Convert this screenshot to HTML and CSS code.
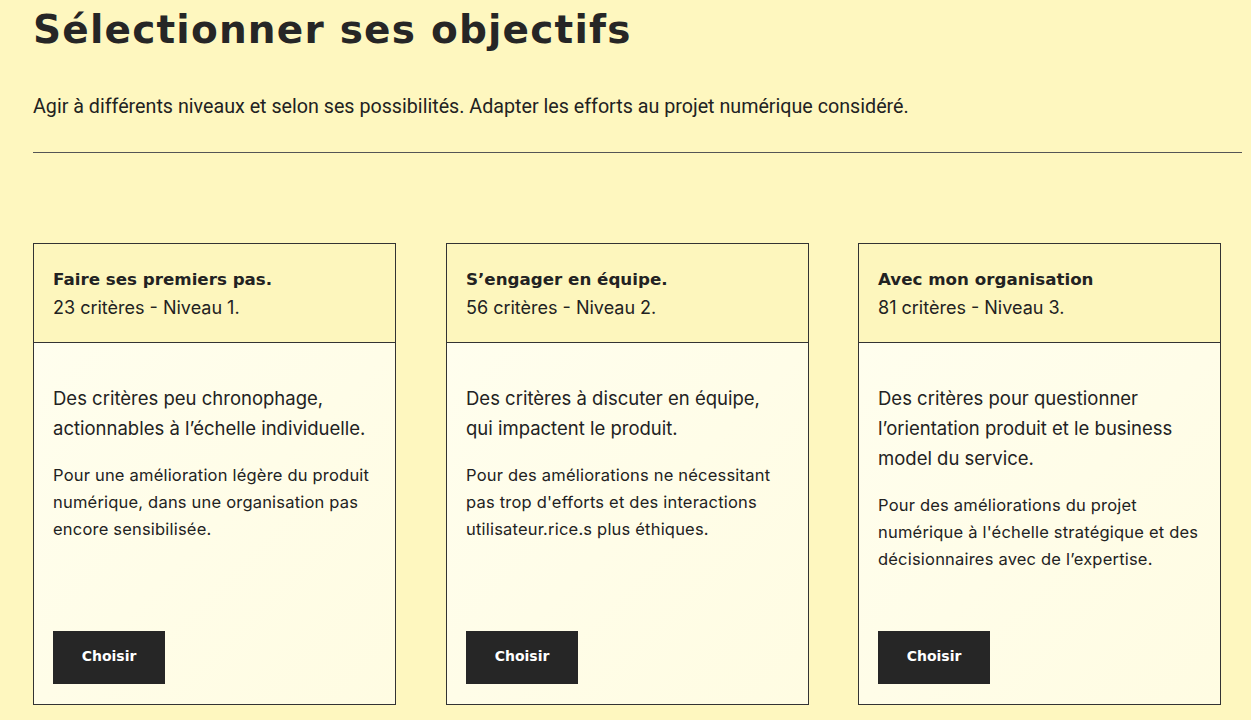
FILE: index.html
```html
<!DOCTYPE html>
<html lang="fr">
<head>
    <meta charset="UTF-8">
    <meta name="viewport" content="width=device-width, initial-scale=1.0">
    <title>Sélectionner ses objectifs</title>
    <link rel="stylesheet" href="styles.css">
</head>
<body>

<div class="page">
    <h1>Sélectionner ses objectifs</h1>
    <p class="intro">Agir à différents niveaux et selon ses possibilités. Adapter les efforts au projet numérique considéré.</p>
    <hr class="separator">

    <div class="levels">
        <div class="level-card">
            <div class="level-head">
                <h2>Faire ses premiers pas.</h2>
                <p>23 critères - Niveau 1.</p>
            </div>
            <div class="level-body">
                <p class="lead">Des critères peu chronophage, actionnables à l’échelle individuelle.</p>
                <p class="detail">Pour une amélioration légère du produit numérique, dans une organisation pas encore sensibilisée.</p>
                <button type="button">Choisir</button>
            </div>
        </div>

        <div class="level-card">
            <div class="level-head">
                <h2>S’engager en équipe.</h2>
                <p>56 critères - Niveau 2.</p>
            </div>
            <div class="level-body">
                <p class="lead">Des critères à discuter en équipe, qui impactent le produit.</p>
                <p class="detail">Pour des améliorations ne nécessitant pas trop d'efforts et des interactions utilisateur.rice.s plus éthiques.</p>
                <button type="button">Choisir</button>
            </div>
        </div>

        <div class="level-card">
            <div class="level-head">
                <h2>Avec mon organisation</h2>
                <p>81 critères - Niveau 3.</p>
            </div>
            <div class="level-body">
                <p class="lead">Des critères pour questionner l’orientation produit et le business model du service.</p>
                <p class="detail">Pour des améliorations du projet numérique à l'échelle stratégique et des décisionnaires avec de l’expertise.</p>
                <button type="button">Choisir</button>
            </div>
        </div>
    </div>
</div>

</body>
</html>
```

FILE: styles.css
```css
body {
    margin: 0;
    background-color: #fef7bf;
    color: #222;
    font-family: Inter, "Noto Sans", sans-serif;
}
.page {
    padding: 0 9px 0 33px;
}
h1 {
    margin: 0;
    padding-top: 7px;
    font-family: "DejaVu Sans", sans-serif;
    font-size: 39px;
    font-weight: bold;
    letter-spacing: 1.2px;
    line-height: 46px;
    color: #262626;
}
.intro {
    margin: 42px 0 0;
    font-family: Roboto, sans-serif;
    font-size: 19.7px;
    line-height: 24px;
}
.separator {
    margin: 33px 0 0;
    border: none;
    border-top: 1px solid #555;
}
.levels {
    display: flex;
    gap: 50px;
    margin-top: 90px;
}
.level-card {
    width: 361px;
    height: 460px;
    border: 1px solid #333;
    display: flex;
    flex-direction: column;
}
.level-card:last-child {
    margin-left: -1px;
}
.level-head {
    height: 99px;
    box-sizing: border-box;
    padding: 22px 19px 0;
    border-bottom: 1px solid #333;
    background-color: #fdf6bd;
}
.level-head h2 {
    margin: 0;
    font-family: "DejaVu Sans", sans-serif;
    font-size: 16.7px;
    line-height: 26px;
    font-weight: bold;
}
.level-head p {
    margin: 4px 0 0;
    font-size: 18px;
    line-height: 24px;
}
.level-body {
    flex: 1;
    display: flex;
    flex-direction: column;
    padding: 40px 19px 20px;
    background: linear-gradient(135deg, #fffeee, #fffce2);
}
.lead {
    margin: 0;
    font-size: 18.5px;
    line-height: 30px;
}
.detail {
    margin: 19px 0 0;
    font-size: 16.5px;
    letter-spacing: 0.2px;
    line-height: 27px;
}
button {
    margin-top: auto;
    align-self: flex-start;
    width: 112px;
    height: 53px;
    padding: 0 0 3px;
    border: none;
    background-color: #262626;
    color: #fff;
    font-family: "DejaVu Sans", sans-serif;
    font-weight: bold;
    font-size: 14px;
    cursor: pointer;
}
```
